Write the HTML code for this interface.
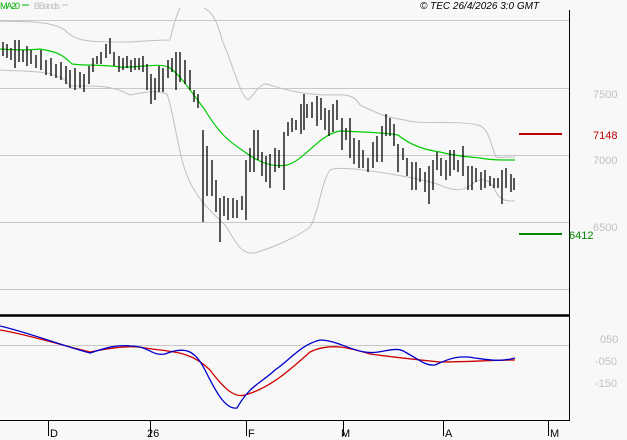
<!DOCTYPE html><html><head><style>body{margin:0;background:#f8f8f8}svg{display:block}text{font-family:"Liberation Sans",sans-serif}</style></head><body>
<svg width="627" height="440" viewBox="0 0 627 440" xmlns="http://www.w3.org/2000/svg">
<rect width="627" height="440" fill="#f8f8f8"/>
<g stroke="#c8c8c8" stroke-width="1">
<path d="M0 20.5H569M0 88.5H569M0 155.5H569M0 222.5H569M0 289.5H569M0 345.5H569"/>
</g>
<g stroke="#000" fill="none">
<path d="M569.5 10V420" stroke-width="1"/>
<path d="M0 315.5H570" stroke-width="2.5"/>
<path d="M0 420.5H570M48.5 420V436M150.5 420V436M246.5 420V436M343.5 420V436M443.5 420V436M548.5 420V436"/>
</g>
<g font-size="11" fill="#000"><text x="50" y="437">D</text><text x="147" y="437">26</text><text x="248" y="437">F</text><text x="341" y="437">M</text><text x="445" y="437">A</text><text x="550" y="437">M</text></g>
<text x="0" y="9" font-size="9" fill="#00b000" textLength="20">MA20</text><path d="M22 5H29" stroke="#00b000"/>
<text x="34" y="9" font-size="9" fill="#c0c0c0" textLength="26">BBands</text><path d="M62 5H68" stroke="#c0c0c0"/>
<text x="420" y="9" font-size="10" font-style="italic" fill="#000">© TEC 26/4/2026 3:0 GMT</text>
<g font-size="11" fill="#c0c0c0"><text x="593" y="98">7500</text><text x="593" y="164">7000</text><text x="593" y="231">6500</text><text x="600" y="343">050</text><text x="595" y="365">-050</text><text x="595" y="387">-150</text></g>
<path d="M519 134H562" stroke="#c00000" stroke-width="2"/><text x="593" y="139" font-size="11" fill="#c00000">7148</text>
<path d="M519 234H562" stroke="#008800" stroke-width="2"/><text x="569" y="239" font-size="11" fill="#008800">6412</text>
<g fill="none" stroke="#c0c0c0">
<path d="M0 21 C20 22 50 20 65 30 C75 42 90 42 130 42 C160 40 165 40 170 40 C173 25 178 12 180 8 M204 8 C212 12 217 20 222 40 C235 70 240 95 248 100 C255 95 260 80 270 85 C280 88 300 95 330 95 C345 94 355 95 360 105 C380 115 390 118 405 120 C420 125 455 120 478 125 C490 128 492 150 496 157 C500 158 505 157 515 157"/>
<path d="M0 70 C20 72 60 68 70 86 C90 86 110 84 130 95 C145 92 155 90 167 94 C173 110 178 150 185 170 C195 200 215 215 225 225 C235 240 240 255 255 253 C280 245 300 235 310 227 C318 215 322 180 330 170 C335 168 340 168 355 169 C380 172 420 178 440 185 C450 190 460 192 470 186 C478 178 488 176 495 190 C500 201 505 201 515 201"/>
</g>
<path d="M0 49 C15 50 30 50 40 49 C55 52 60 52 72 64 C85 66 100 64 120 67 C140 68 160 62 170 68 C180 75 190 90 205 110 C220 135 230 142 242 150 C255 160 270 168 287 165 C305 160 318 135 340 131 C360 132 380 132 398 135 C410 145 425 150 440 152 C455 156 470 157 480 158 C490 160 500 160 515 160" fill="none" stroke="#00cc00" stroke-width="1.2"/>
<g stroke="#000" stroke-width="1.3" fill="none">
<path d="M3 42V56M7 44V58M11 48V60M15 40V68M19 40V62M23 50V62M27 46V66M31 50V64M36 55V68M41 50V70M46 60V75M51 58V76M56 64V78M61 62V80M66 66V84M70 70V88M75 68V90M80 72V88M84 74V92M89 66V84M93 58V72M97 56V64M101 52V64M106 44V58M110 38V54M114 52V66M119 56V72M123 58V70M127 56V68M131 60V72M135 58V70M139 58V70M143 56V72M147 64V90M151 74V104M155 78V100M159 66V92M163 68V92M168 60V78M172 58V72M176 52V90M180 52V82M185 60V84M190 70V90M194 90V102M198 94V108M203 130V222M207 146V196M212 160V196M216 180V212M220 198V242M224 196V216M228 198V220M233 198V218M237 200V218M242 196V210M246 160V220M250 148V172M254 130V172M258 130V160M262 152V176M266 156V182M270 154V188M275 148V172M279 150V168M284 132V190M288 122V136M292 118V132M296 120V130M301 104V134M304 94V130M307 104V118M312 102V118M317 96V126M321 98V120M325 108V130M329 110V136M333 104V132M337 100V120M342 118V150M346 128V140M350 118V158M354 138V164M359 140V168M363 150V168M368 158V172M373 142V168M377 136V162M382 126V162M386 114V136M390 118V136M394 124V146M398 144V172M403 148V160M407 158V176M412 162V190M416 162V190M420 168V182M425 172V192M429 166V204M433 160V190M437 152V170M441 158V176M446 160V180M450 150V176M454 150V170M458 160V172M463 146V176M468 166V190M472 166V190M476 168V182M481 172V190M485 170V188M490 176V186M494 178V188M498 178V188M502 170V204M506 168V188M511 174V192M514 178V190"/>
</g>
<path d="M0 330 C30 335 60 345 90 352 C110 348 130 345 145 348 C170 352 190 350 210 370 C225 390 235 398 245 395 C270 388 290 370 310 352 C330 342 350 348 370 354 C400 358 420 360 440 362 C470 362 490 360 515 360" fill="none" stroke="#d00000" stroke-width="1.3"/>
<path d="M0 326 C30 333 60 345 90 353 C100 350 115 344 130 346 C150 346 150 356 165 354 C185 346 195 350 205 370 C215 390 225 410 237 408 C250 385 260 384 275 370 C290 360 300 345 320 340 C335 340 350 350 365 352 C380 355 395 345 405 352 C420 360 425 366 435 365 C450 358 460 355 475 358 C490 360 500 362 515 358" fill="none" stroke="#0000cc" stroke-width="1.3"/>
</svg></body></html>
